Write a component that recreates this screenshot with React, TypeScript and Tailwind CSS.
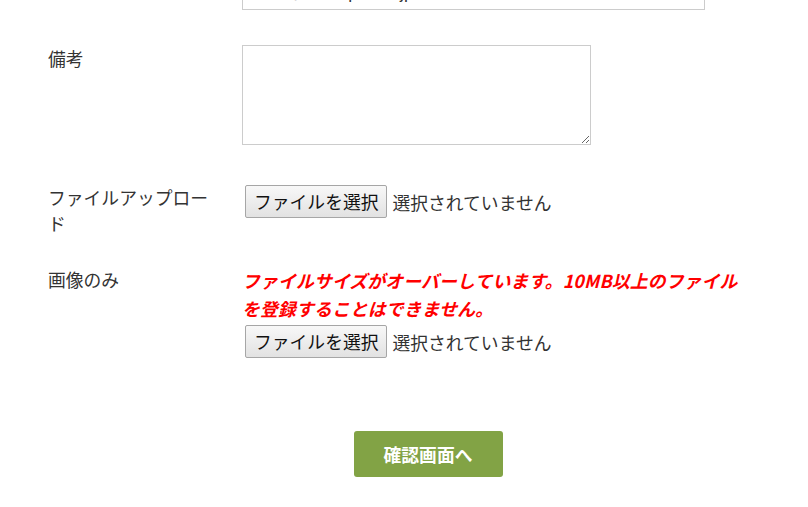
import React from "react";

const jp = { fontFamily: '"Noto Sans CJK JP", "Noto Sans", sans-serif' };

function FileField() {
  return (
    <div className="flex items-center">
      <span className="ml-[3px] flex h-[33px] items-center rounded-[2px] border border-[#a6a6a6] bg-gradient-to-b from-[#f8f8f8] to-[#e2e2e2] px-[8px] text-[17.8px] leading-none text-[#111]">
        ファイルを選択
      </span>
      <span className="ml-[5px] text-[17.8px] leading-[26px] text-[#333]">選択されていません</span>
    </div>
  );
}

export default function App() {
  return (
    <div className="h-[507px] w-[808px] overflow-hidden bg-white text-[#333]" style={jp}>
      <div className="pl-[48px]">
        {/* email row (scrolled off top) */}
        <div className="-mt-[31px] flex">
          <div className="w-[194px] shrink-0" />
          <div className="flex h-[41px] w-[463px] items-end border border-[#cccccc] bg-white pb-[7px] pl-[12px]">
            <span
              className="text-[17.6px] leading-none text-[#333]"
              style={{ fontFamily: '"Liberation Sans", Arial, sans-serif' }}
            >
              mail@example.co.jp
            </span>
          </div>
        </div>

        {/* 備考 */}
        <div className="mt-[35px] flex">
          <div className="w-[194px] shrink-0 pr-[24px] text-[17.8px] leading-[26px]">備考</div>
          <textarea
            className="h-[100px] w-[349px] resize border border-[#cccccc] bg-white outline-none"
            defaultValue=""
          />
        </div>

        {/* ファイルアップロード */}
        <div className="mt-[39px] flex">
          <div className="w-[194px] shrink-0 pr-[24px] text-[17.8px] leading-[26px]">ファイルアップロード</div>
          <div className="mt-[1px]">
            <FileField />
          </div>
        </div>

        {/* 画像のみ */}
        <div className="mt-[30px] flex">
          <div className="w-[194px] shrink-0 pr-[24px] text-[17.8px] leading-[26px]">画像のみ</div>
          <div className="w-[500px]">
            <p className="text-[17.8px] font-bold italic leading-[28px] tracking-[0.2px] text-[#ff0000]">
              ファイルサイズがオーバーしています。10MB以上のファイルを登録することはできません。
            </p>
            <div className="mt-[3px]">
              <FileField />
            </div>
          </div>
        </div>

        {/* submit */}
        <div className="mt-[73px] flex justify-center">
          <button
            type="button"
            className="h-[46px] w-[149px] rounded-[3px] bg-[#82a345] text-[17.8px] font-bold text-white"
            style={jp}
          >
            確認画面へ
          </button>
        </div>
      </div>
    </div>
  );
}
